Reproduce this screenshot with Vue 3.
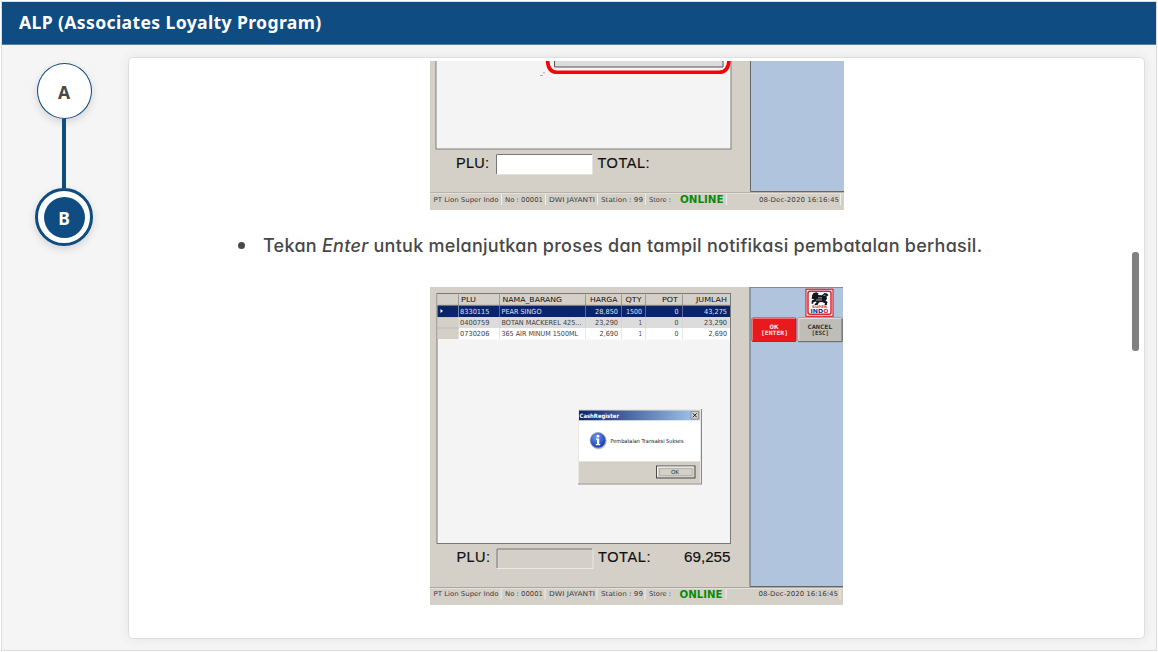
<script setup>
const steps = [
  { label: 'A', active: false },
  { label: 'B', active: true },
]

const status = [
  { text: 'PT Lion Super Indo', x: 3.5, w: 65 },
  { text: 'No : 00001', x: 75, w: 38 },
  { text: 'DWI JAYANTI', x: 119, w: 46 },
  { text: 'Station : 99', x: 171, w: 42 },
  { text: 'Store :', x: 219, w: 22 },
]
const dividers = [71.5, 115.5, 167.5, 215.5, 296.5, 410.5]

const columns = [
  { text: 'PLU', x: 31, w: 15 },
  { text: 'NAMA_BARANG', x: 72.5, w: 59.5 },
  { text: 'HARGA', x: 160, w: 27.5 },
  { text: 'QTY', x: 195.5, w: 16 },
  { text: 'POT', x: 232, w: 16 },
  { text: 'JUMLAH', x: 266, w: 31 },
]
const gridLines = [28.5, 69.5, 155.5, 191.5, 215.5, 252.5]

const rows = [
  {
    y: 18.5, h: 11.5, fill: '#0a246a', color: '#dfe4f0',
    cells: [
      { text: '8330115', x: 30, w: 29.5 },
      { text: 'PEAR SINGO', x: 71.5, w: 40 },
      { text: '28,850', x: 165, w: 23 },
      { text: '1500', x: 196, w: 16 },
      { text: '0', x: 244.5, w: 4 },
      { text: '43,275', x: 274, w: 23 },
    ],
  },
  {
    y: 30, h: 11, fill: '#dcdcdc', color: '#3d3d3d',
    cells: [
      { text: '0400759', x: 30, w: 29.5 },
      { text: 'BOTAN MACKEREL 425...', x: 71.5, w: 80 },
      { text: '23,290', x: 165, w: 23 },
      { text: '1', x: 208.5, w: 3.5 },
      { text: '0', x: 244.5, w: 4 },
      { text: '23,290', x: 274, w: 23 },
    ],
  },
  {
    y: 41, h: 11.5, fill: '#ffffff', color: '#3d3d3d',
    cells: [
      { text: '0730206', x: 30, w: 29.5 },
      { text: '365 AIR MINUM 1500ML', x: 71.5, w: 76.5 },
      { text: '2,690', x: 169.5, w: 18.5 },
      { text: '1', x: 208.5, w: 3.5 },
      { text: '0', x: 244.5, w: 4 },
      { text: '2,690', x: 278.5, w: 18.5 },
    ],
  },
]
</script>

<template>
  <div class="frame">
    <header class="topbar">ALP (Associates Loyalty Program)</header>
    <div class="body">
      <nav class="steps">
        <template v-for="(s, i) in steps" :key="s.label">
          <span v-if="i" class="link"></span>
          <span class="step" :class="{ active: s.active }"><b>{{ s.label }}</b></span>
        </template>
      </nav>

      <main class="card">
        <div class="content">
          <svg class="shot first" width="414" height="149" viewBox="0 0 414 149">
            <rect width="414" height="149" fill="#d4d0c8" />
            <rect x="6" y="-2" width="295" height="90" fill="#f4f4f4" stroke="#7f7f7f" />
            <path d="M124.500 -2V6H293V-2" fill="#dcdcdc" stroke="#555" />
            <path d="M117.500 -2Q117.500 11.300 127 11.300H289Q299 11.300 299 -2" fill="none" stroke="#fb0007" stroke-width="3.600" />
            <path d="M110 14.500h3M113 11.800h2" stroke="#9b9b9b" stroke-width=".8" />
            <text x="26" y="107" class="big" textLength="33">PLU:</text>
            <rect x="66" y="93" width="97" height="20" fill="#fff" />
            <path d="M66.500 113V93.500H162.500" fill="none" stroke="#777" />
            <path d="M66.500 113.500H162.500V93.500" fill="none" stroke="#e6e3dd" />
            <text x="167.500" y="107" class="big" textLength="52">TOTAL:</text>
            <rect x="320" width="94" height="130" fill="#b0c4de" />
            <path d="M320.500 0V130.500H414" fill="none" stroke="#666" />
            <path d="M0 131.500H414" stroke="#b7b3ab" />
            <path d="M0 132.500H414" stroke="#e4e1db" />
            <path v-for="d in dividers" :key="d" :d="`M${d} 133v11`" stroke="#efede8" />
            <text v-for="s in status" :key="s.text" :x="s.x" y="140.500" class="tiny" :textLength="s.w" lengthAdjust="spacingAndGlyphs">{{ s.text }}</text>
            <text x="250" y="142.300" class="online" textLength="43.500" lengthAdjust="spacingAndGlyphs">ONLINE</text>
            <text x="329" y="140.500" class="tiny" textLength="80" lengthAdjust="spacingAndGlyphs">08-Dec-2020 16:16:45</text>
          </svg>

          <ul class="notes">
            <li>Tekan <em>Enter</em> untuk melanjutkan proses dan tampil notifikasi pembatalan berhasil.</li>
          </ul>

          <svg class="shot second" width="413" height="318.500" viewBox="0 0 413 318.500">
            <defs>
              <linearGradient id="title">
                <stop offset="0" stop-color="#0a246a" />
                <stop offset="1" stop-color="#a6caf0" />
              </linearGradient>
              <radialGradient id="info" cx=".4" cy=".3" r=".7">
                <stop offset="0" stop-color="#6c96ee" />
                <stop offset="1" stop-color="#1538ae" />
              </radialGradient>
            </defs>
            <rect width="413" height="319" fill="#d4d0c8" />
            <rect x="7" y="6.500" width="293.500" height="250" fill="#f4f4f4" stroke="#7a7a7a" />
            <rect x="7.500" y="7" width="292.500" height="11" fill="#d4d0c8" />
            <text v-for="c in columns" :key="c.text" :x="c.x" y="15.300" class="cell head" :textLength="c.w" lengthAdjust="spacingAndGlyphs">{{ c.text }}</text>
            <rect x="7.500" y="18" width="21" height="34" fill="#d4d0c8" />
            <g v-for="r in rows" :key="r.y">
              <rect x="28.500" :y="r.y" width="271.500" :height="r.h" :fill="r.fill" />
              <text v-for="c in r.cells" :key="c.x" :x="c.x" :y="r.y + 8" class="cell" :fill="r.color" :textLength="c.w" lengthAdjust="spacingAndGlyphs">{{ c.text }}</text>
              <path :d="`M7.500 ${r.y}h21`" stroke="#b4b0a8" stroke-width=".7" />
            </g>
            <rect x="7.500" y="18.500" width="21" height="11.500" fill="#0a246a" />
            <path d="M10.500 22v4l2.500-2z" fill="#fff" />
            <path v-for="g in gridLines" :key="g" :d="`M${g} 7.500v11`" stroke="#8f8c86" stroke-width=".8" />
            <path v-for="g in gridLines" :key="'b' + g" :d="`M${g} 18.500v33.500`" stroke="#c9c9cc" stroke-width=".7" opacity=".6" />
            <path d="M7.500 18.300H300" stroke="#77746f" stroke-width=".7" />

            <g>
              <rect x="148" y="122" width="124" height="75.500" fill="#8b8985" />
              <rect x="148" y="122" width="123" height="74.500" fill="#e9e7e2" />
              <rect x="149" y="133" width="121" height="41.500" fill="#fff" />
              <rect x="149" y="174.500" width="121" height="21.500" fill="#d4d0c8" />
              <rect x="149" y="123.500" width="121" height="9.800" fill="url(#title)" />
              <text x="149.500" y="130.500" class="caption" textLength="39.500" lengthAdjust="spacingAndGlyphs">CashRegister</text>
              <rect x="261" y="124.500" width="7.500" height="7.500" fill="#d4d0c8" stroke="#77746f" stroke-width=".6" />
              <path d="M262.800 126.300l3.900 3.900m0-3.900l-3.900 3.900" stroke="#222" />
              <circle cx="168.500" cy="154.300" r="8.200" fill="#a9a9b2" opacity=".7" />
              <circle cx="168" cy="153.300" r="7.800" fill="url(#info)" stroke="#93a0c2" stroke-width=".8" />
              <circle cx="168" cy="149.200" r="1.400" fill="#fff" />
              <path d="M166 151.600h3.200v5.400h1v1.200h-4.400V157h1.200v-4.200h-1z" fill="#fff" />
              <text x="180.500" y="156.200" class="msg" textLength="73" lengthAdjust="spacingAndGlyphs">Pembatalan Transaksi Sukses</text>
              <rect x="226.500" y="179" width="38.500" height="12" fill="#d4d0c8" stroke="#494949" />
              <path d="M227.500 189.500V180H264" fill="none" stroke="#f6f5f2" />
              <rect x="229.500" y="181.800" width="32.500" height="6.600" fill="none" stroke="#999" stroke-width=".5" />
              <text x="241" y="187.300" class="msg" textLength="8" lengthAdjust="spacingAndGlyphs">OK</text>
            </g>

            <text x="26.500" y="275.400" class="big" textLength="33.500">PLU:</text>
            <path d="M67 281.500V262H162.500" fill="none" stroke="#777" />
            <path d="M66.500 281.500H163V261.500" fill="none" stroke="#ebe9e4" />
            <text x="168" y="275.400" class="big" textLength="52.500">TOTAL:</text>
            <text x="254" y="275.400" class="big" textLength="46.500" lengthAdjust="spacingAndGlyphs">69,255</text>

            <rect x="319.500" y="0" width="93.500" height="299" fill="#b0c4de" />
            <path d="M320 0V299.500H413" fill="none" stroke="#666" />
            <path d="M319.500 .5H413" stroke="#858b94" />

            <rect x="376" y="2.300" width="27" height="27" fill="#fff" stroke="#d52531" stroke-width="1.200" />
            <rect x="378" y="4.300" width="23" height="23" rx="2" fill="#fff" stroke="#d8232e" stroke-width="1.500" />
            <path d="M382 8.500l1.500-2.500 3-.7 2 1.200-.5 1.500 4 .3 2.500-2.300 2.500.5 1.500 1.700-2 1.300.5 2.500-1.500 1.500 2 1.500-.7 3h-2.300l.5-1.700-3-1.300-3 .2-1.500 2.800h-3l.5-1.500 1.500-.5-.5-1.500-2.500.8-.5 1.500h-1.500l.3-3.300 2.700-1.200-3-.5.500-2z" fill="#15151d" />
            <path d="M388 10.800h4M386 13h6M393.500 8.300h2" stroke="#fff" stroke-width=".6" />
            <text x="382" y="20.800" class="logo-top" textLength="15" lengthAdjust="spacingAndGlyphs">SUPER</text>
            <text x="380.500" y="25.700" class="logo" textLength="18" lengthAdjust="spacingAndGlyphs">IND<tspan fill="#e12735">O</tspan></text>

            <rect x="322" y="31" width="44" height="23.500" rx="1" fill="#e81a1c" stroke="#a61518" stroke-width=".8" />
            <path d="M322.500 53.500V31.500H365.500" fill="none" stroke="#f58b88" stroke-width=".8" />
            <rect x="368" y="31" width="44" height="23.500" rx="1" fill="#bfbdb7" stroke="#77756f" stroke-width=".8" />
            <path d="M368.700 53.500V31.500H411.500" fill="none" stroke="#efeee9" stroke-width=".8" />
            <path d="M368 54.700H412.300V31.500" fill="none" stroke="#66645f" stroke-width=".8" />
            <g class="key">
              <text x="339.500" y="42" fill="#ffe3e0" textLength="9" lengthAdjust="spacingAndGlyphs">OK</text>
              <text x="331" y="48.300" fill="#ffe3e0" textLength="27" lengthAdjust="spacingAndGlyphs">[ENTER]</text>
              <text x="377.500" y="42" fill="#303030" textLength="25" lengthAdjust="spacingAndGlyphs">CANCEL</text>
              <text x="381.500" y="48.300" fill="#303030" textLength="17.500" lengthAdjust="spacingAndGlyphs">[ESC]</text>
            </g>

            <path d="M0 300.500H413" stroke="#aaa79f" />
            <path d="M0 301.500H413" stroke="#e4e1db" />
            <path v-for="d in dividers" :key="d" :d="`M${d - 0.5} 302v10.500`" stroke="#efede8" />
            <text v-for="s in status" :key="s.text" :x="s.x" y="309" class="tiny" :textLength="s.w" lengthAdjust="spacingAndGlyphs">{{ s.text }}</text>
            <text x="249.500" y="311" class="online" textLength="43" lengthAdjust="spacingAndGlyphs">ONLINE</text>
            <text x="328.500" y="309" class="tiny" textLength="79.500" lengthAdjust="spacingAndGlyphs">08-Dec-2020 16:16:45</text>
          </svg>
        </div>
        <span class="thumb"></span>
      </main>
    </div>
  </div>
</template>

<style>
body {
  background: #fff;
}
</style>

<style scoped>
.frame {
  box-sizing: border-box;
  width: 1156px;
  height: 650px;
  margin: 1px;
  border: 1px solid #dcdcdc;
  background: #f5f5f5;
  display: flex;
  flex-direction: column;
  overflow: hidden;
  font-family: "Noto Sans", "Open Sans", sans-serif;
}
.topbar {
  box-sizing: border-box;
  height: 43px;
  flex: none;
  padding-left: 17px;
  background: #0f4c81;
  border-bottom: 1px solid #5580a5;
  color: #fff;
  font-size: 17.6px;
  font-weight: 700;
  letter-spacing: 0.36px;
  line-height: 41px;
  white-space: nowrap;
}
.body {
  flex: 1;
  min-height: 0;
  display: flex;
  padding: 12px 11px 11px 0;
}
.steps {
  width: 124px;
  flex: none;
  margin-right: 2px;
  padding-top: 6px;
  display: flex;
  flex-direction: column;
  align-items: center;
}
.step {
  box-sizing: border-box;
  width: 55px;
  height: 56px;
  flex: none;
  display: flex;
  align-items: center;
  justify-content: center;
  border: 1px solid #0f4c81;
  border-radius: 50%;
  background: #fff;
  color: #484848;
  font-size: 17.5px;
  box-shadow: 0 3px 8px rgba(0, 0, 0, 0.14);
}
.step b {
  line-height: 24px;
  padding-top: 2px;
}
.step.active {
  width: 58px;
  height: 58px;
  border-width: 3px;
  color: #fff;
}
.step.active b {
  width: 41px;
  height: 41px;
  padding: 0;
  border-radius: 50%;
  background: #0f4c81;
  line-height: 42px;
  text-align: center;
}
.link {
  width: 4px;
  height: 69px;
  background: #0f4c81;
}
.card {
  box-sizing: border-box;
  position: relative;
  flex: 1;
  border: 1px solid #dedede;
  border-radius: 5px;
  background: #fff;
  box-shadow: 0 0 12px rgba(0, 0, 0, 0.07);
}
.content {
  display: flex;
  flex-direction: column;
  padding: 3px 0 0 110px;
}
.shot {
  display: block;
  margin-left: 191px;
}
.notes {
  margin: 21px 0 25.5px;
  padding: 0 0 0 24px;
  list-style: none;
  color: #484848;
  font-family: Inter, "Open Sans", sans-serif;
  font-feature-settings: "cv11" 1;
  font-size: 18px;
  font-weight: 500;
  letter-spacing: 0.27px;
  line-height: 30px;
  white-space: nowrap;
}
.notes li {
  position: relative;
}
.notes li::before {
  content: "";
  position: absolute;
  left: -25px;
  top: 11px;
  width: 7px;
  height: 7px;
  border-radius: 50%;
  background: #484848;
}
.thumb {
  position: absolute;
  right: 5px;
  top: 194px;
  width: 7px;
  height: 99px;
  border-radius: 3px;
  background: #808080;
}
.big {
  font: 14.5px "Liberation Sans", sans-serif;
  fill: #111;
  stroke: #111;
  stroke-width: 0.2px;
}
.tiny {
  font: 6.6px "DejaVu Sans", sans-serif;
  fill: #3c3c3c;
}
.online {
  font: bold 10px "DejaVu Sans", sans-serif;
  fill: #078c07;
}
.cell {
  font: 7px "DejaVu Sans", sans-serif;
}
.head {
  fill: #111;
}
.caption {
  font: bold 6px "DejaVu Sans", sans-serif;
  fill: #fff;
}
.msg {
  font: 5.6px "DejaVu Sans", sans-serif;
  fill: #222;
}
.logo-top {
  font: bold 3.5px "DejaVu Sans", sans-serif;
  fill: #d8232e;
}
.logo {
  font: bold 5.6px "DejaVu Sans", sans-serif;
  fill: #2b2c8e;
}
.key {
  font: bold 6px "DejaVu Sans Mono", monospace;
}
</style>
